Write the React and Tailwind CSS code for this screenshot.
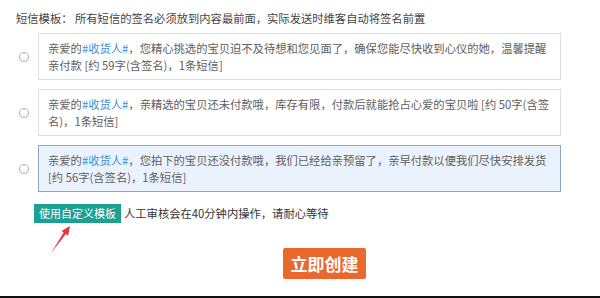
export default function App() {
  const font = { fontFamily: '"Noto Sans CJK SC", "Noto Sans", sans-serif' };
  const Tag = () => <span className="text-[#3f8fd2]">#收货人#</span>;
  const cards = [
    {
      l1: <>亲爱的<Tag />，您精心挑选的宝贝迫不及待想和您见面了，确保您能尽快收到心仪的她，温馨提醒</>,
      l2: '亲付款 [约 59字(含签名)，1条短信]',
      sel: false,
    },
    {
      l1: <>亲爱的<Tag />，亲精选的宝贝还未付款哦，库存有限，付款后就能抢占心爱的宝贝啦 [约 50字(含签</>,
      l2: '名)，1条短信]',
      sel: false,
    },
    {
      l1: <>亲爱的<Tag />，您拍下的宝贝还没付款哦，我们已经给亲预留了，亲早付款以便我们尽快安排发货</>,
      l2: '[约 56字(含签名)，1条短信]',
      sel: true,
    },
  ];
  return (
    <div style={font} className="relative w-[600px] h-[298px] bg-white overflow-hidden border-b-2 border-[#111] flex flex-col">
      <div className="pt-[10px] pl-[16px] leading-[17px] text-[11.3px] text-[#444] whitespace-nowrap">
        短信模板：&nbsp;所有短信的签名必须放到内容最前面，实际发送时维客自动将签名前置
      </div>
      <div className="mt-[6px] flex flex-col gap-[9px]">
        {cards.map((c, i) => (
          <div key={i} className="flex items-center">
            <div className="ml-[19px] w-[10px] h-[10px] rounded-full border border-[#a9a9a9] bg-white" />
            <div
              className={
                'ml-[9px] w-[523px] h-[47px] border px-[9px] py-[6px] leading-[17px] text-[11.3px] text-[#606060] ' +
                (c.sel ? 'border-[#8ea6c4] bg-[#eaf3fd]' : 'border-[#dedede] bg-white')
              }
            >
              <div className="whitespace-nowrap">{c.l1}</div>
              <div className="whitespace-nowrap">{c.l2}</div>
            </div>
          </div>
        ))}
      </div>
      <div className="mt-[12px] flex items-center">
        <div className="ml-[34px] w-[87px] h-[19px] bg-[#1ba092] text-white text-[11px] leading-[19px] flex items-center justify-center whitespace-nowrap">
          使用自定义模板
        </div>
        <div className="ml-[3px] text-[11.3px] text-[#333] leading-[19px] whitespace-nowrap">
          人工审核会在40分钟内操作，请耐心等待
        </div>
      </div>
      <div className="mt-[25px] ml-[283px] w-[83px] h-[31px] bg-[#e8682d] rounded-[2px] text-white font-bold text-[17px] flex items-center justify-center whitespace-nowrap">
        立即创建
      </div>
      <svg className="absolute left-0 top-0 pointer-events-none" width="600" height="298" viewBox="0 0 600 298">
        <polygon
          points="51,253 63.7,232.6 61.5,231.1 70,226 68.1,235.7 65.9,234.1"
          fill="#e8353a"
        />
      </svg>
    </div>
  );
}
